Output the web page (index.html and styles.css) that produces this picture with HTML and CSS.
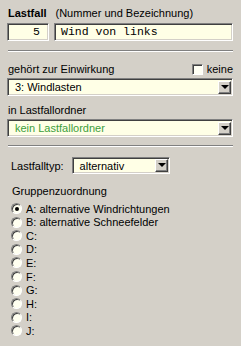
FILE: index.html
```html
<!DOCTYPE html>
<html lang="de">
<head>
  <meta charset="UTF-8" />
  <title>Lastfall</title>
  <link rel="stylesheet" href="styles.css">
</head>
<body>
  <div class="panel">
    <div class="head">
      <span class="title">Lastfall</span>
      <span class="hint">(Nummer und Bezeichnung)</span>
    </div>
    <div class="name-row">
      <div class="field field-num">5</div>
      <div class="field field-name">Wind von links</div>
    </div>

    <div class="sep"></div>

    <div class="label-row">
      <span>gehört zur Einwirkung</span>
      <span class="check"><span class="box"></span>keine</span>
    </div>
    <div class="combo">
      <span class="combo-text">3: Windlasten</span>
      <span class="drop"></span>
    </div>

    <div class="label">in Lastfallordner</div>
    <div class="combo">
      <span class="combo-text green">kein Lastfallordner</span>
      <span class="drop"></span>
    </div>

    <div class="sep sep-second"></div>

    <div class="group">
      <div class="type-row">
        <span>Lastfalltyp:</span>
        <div class="combo combo-small">
          <span class="combo-text">alternativ</span>
          <span class="drop"></span>
        </div>
      </div>

      <div class="label group-label">Gruppenzuordnung</div>
      <ul class="radios">
        <li><span class="radio checked"></span>A: alternative Windrichtungen</li>
        <li><span class="radio"></span>B: alternative Schneefelder</li>
        <li><span class="radio"></span>C:</li>
        <li><span class="radio"></span>D:</li>
        <li><span class="radio"></span>E:</li>
        <li><span class="radio"></span>F:</li>
        <li><span class="radio"></span>G:</li>
        <li><span class="radio"></span>H:</li>
        <li><span class="radio"></span>I:</li>
        <li><span class="radio"></span>J:</li>
      </ul>
    </div>
  </div>
</body>
</html>
```

FILE: styles.css
```css
body {
    margin: 0;
    background: #d4d0c8;
    font-family: 'Liberation Sans', Arial, sans-serif;
    font-size: 11px;
    color: #000;
}

.panel {
    width: 241px;
    height: 346px;
    box-sizing: border-box;
    padding: 6px 8px 0 7px;
}

.head {
    display: flex;
    gap: 9px;
    height: 14px;
    line-height: 14px;
    padding-left: 1px;
}

    .head .title {
        font-weight: bold;
    }

.name-row {
    display: flex;
    gap: 5px;
    margin-top: 3px;
}

/* sunken windows-style edit box */
.field,
.combo {
    height: 18px;
    box-sizing: border-box;
    background: #ffffe6;
    border: 1px solid;
    border-color: #808080 #ffffff #ffffff #808080;
    box-shadow: inset 1px 1px 0 #404040, inset -1px -1px 0 #d4d0c8;
    font-family: 'Liberation Mono', 'Courier New', monospace;
    font-size: 11.5px;
    line-height: 16px;
}

.field-num {
    width: 42px;
    text-align: right;
    padding-right: 8px;
}

.field-name {
    flex: 1;
    padding-left: 6px;
}

.sep {
    height: 0;
    border-top: 1px solid #808080;
    border-bottom: 1px solid #ffffff;
    margin: 9px 0 10px 1px;
}

.label-row {
    display: flex;
    justify-content: space-between;
    align-items: center;
    height: 14px;
    line-height: 14px;
    padding-left: 1px;
}

.check {
    display: flex;
    align-items: center;
    gap: 4px;
}

    .check .box {
        width: 11px;
        height: 11px;
        box-sizing: border-box;
        background: #fffff4;
        border: 1px solid;
        border-color: #808080 #ffffff #ffffff #808080;
        box-shadow: inset 1px 1px 0 #404040;
    }

.combo {
    display: flex;
    align-items: center;
    justify-content: space-between;
    margin-top: 2px;
    padding: 0 1px 0 7px;
    font-family: 'Liberation Sans', Arial, sans-serif;
    font-size: 11px;
}

.combo-text.green {
    color: #3c9e3c;
}

.drop {
    position: relative;
    width: 13px;
    height: 13px;
    box-sizing: border-box;
    background: #d4d0c8;
    border: 1px solid;
    border-color: #ffffff #404040 #404040 #ffffff;
    box-shadow: inset -1px -1px 0 #808080;
}

    .drop::after {
        content: "";
        position: absolute;
        left: 2px;
        top: 3px;
        border-left: 4px solid transparent;
        border-right: 4px solid transparent;
        border-top: 4px solid #000;
    }

.label {
    height: 14px;
    line-height: 14px;
    margin-top: 7px;
    padding-left: 1px;
}

.sep-second {
    margin-top: 8px;
}

.group {
    padding-left: 4px;
}

.type-row {
    display: flex;
    align-items: center;
    gap: 8px;
    margin-top: 2px;
}

.combo-small {
    width: 98px;
    height: 17px;
    margin-top: 0;
}

.group-label {
    margin-top: 10px;
}

.radios {
    list-style: none;
    margin: 4px 0 0;
    padding: 0;
}

    .radios li {
        display: flex;
        align-items: center;
        gap: 4px;
        height: 13.55px;
    }

.radio {
    position: relative;
    width: 11px;
    height: 11px;
    box-sizing: border-box;
    border-radius: 50%;
    background: #fffff0;
    border: 1px solid;
    border-color: #808080 #ffffff #ffffff #808080;
    box-shadow: inset 1px 1px 0 #404040;
}

    .radio.checked::after {
        content: "";
        position: absolute;
        left: 3px;
        top: 3px;
        width: 4px;
        height: 4px;
        border-radius: 50%;
        background: #000;
    }
```
